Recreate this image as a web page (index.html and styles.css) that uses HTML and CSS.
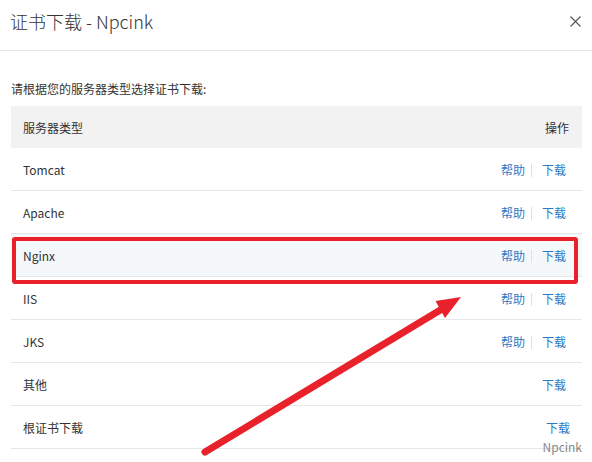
FILE: index.html
```html
<!DOCTYPE html>
<html lang="zh-CN">
<head>
<meta charset="utf-8">
<title>证书下载 - Npcink</title>
<link rel="stylesheet" href="styles.css">
</head>
<body>
<div class="dialog">
  <div class="dlg-head">
    <div class="dlg-title">证书下载 - Npcink</div>
    <svg class="dlg-close" width="11" height="11" viewBox="0 0 11 11"><path d="M0.5 0.5L10.5 10.5M10.5 0.5L0.5 10.5" stroke="#555" stroke-width="1.1" fill="none"/></svg>
  </div>
  <div class="dlg-body">
    <p class="hint">请根据您的服务器类型选择证书下载:</p>
    <table class="cert-table">
      <thead>
        <tr><th class="c-name">服务器类型</th><th class="c-op">操作</th></tr>
      </thead>
      <tbody>
        <tr><td class="c-name">Tomcat</td><td class="c-op"><a>帮助</a><span class="sep"></span><a>下载</a></td></tr>
        <tr><td class="c-name">Apache</td><td class="c-op"><a>帮助</a><span class="sep"></span><a>下载</a></td></tr>
        <tr class="hover"><td class="c-name">Nginx</td><td class="c-op"><a>帮助</a><span class="sep"></span><a>下载</a></td></tr>
        <tr><td class="c-name">IIS</td><td class="c-op"><a>帮助</a><span class="sep"></span><a>下载</a></td></tr>
        <tr><td class="c-name">JKS</td><td class="c-op"><a>帮助</a><span class="sep"></span><a>下载</a></td></tr>
        <tr><td class="c-name">其他</td><td class="c-op"><a>下载</a></td></tr>
        <tr><td class="c-name">根证书下载</td><td class="c-op c-op-root"><a>下载</a></td></tr>
      </tbody>
    </table>
  </div>
  <div class="mark-box"></div>
  <svg class="mark-arrow" width="592" height="462" viewBox="0 0 592 462">
    <line x1="205" y1="452" x2="442" y2="309" stroke="#e8212b" stroke-width="7" stroke-linecap="round"/>
    <polygon points="461,297 445,318 435.5,301" fill="#e8212b"/>
  </svg>
  <div class="watermark">Npcink</div>
</div>
</body>
</html>
```
FILE: styles.css
```css
html, body {
  margin: 0;
  padding: 0;
  background: #fff;
}
body {
  font-family: "Noto Sans CJK SC", "Noto Sans", sans-serif;
  color: #333;
}
.dialog {
  position: relative;
  width: 592px;
  height: 462px;
  overflow: hidden;
}
.dlg-head {
  height: 50px;
  border-bottom: 1px solid #e5e5e5;
  display: flex;
  justify-content: space-between;
  align-items: flex-start;
  padding: 0 11px 0 10px;
}
.dlg-title {
  font-size: 18px;
  line-height: 24px;
  padding-top: 9px;
  color: #333;
  font-weight: 300;
}
.dlg-close {
  margin-top: 16px;
}
.dlg-body {
  padding: 0 10px 0 11px;
}
.hint {
  margin: 28px 0 7px 0;
  font-size: 12px;
  line-height: 20px;
  color: #333;
}
.cert-table {
  width: 571px;
  border-collapse: collapse;
  font-size: 12px;
}
.cert-table th {
  background: #f2f2f2;
  height: 42px;
  padding: 0;
  font-weight: normal;
  color: #333;
}
.cert-table td {
  height: 42px;
  padding: 0;
  border-bottom: 1px solid #e6e6e6;
}
.cert-table tr.hover td {
  background: #f5f8fb;
}
.c-name {
  text-align: left;
  padding-left: 12px !important;
}
.c-op {
  text-align: right;
  padding-right: 16px !important;
  white-space: nowrap;
}
th.c-op {
  padding-right: 13px !important;
}
.c-op-root {
  padding-right: 12px !important;
}
.c-op a {
  color: #2b7bc4;
  text-decoration: none;
}
.sep {
  display: inline-block;
  width: 1px;
  height: 13px;
  background: #e0e0e0;
  vertical-align: -2px;
  margin: 0 10px 0 6px;
}
.mark-box {
  position: absolute;
  left: 12px;
  top: 237px;
  width: 566px;
  height: 47px;
  box-sizing: border-box;
  border: 4px solid #e8212b;
  border-radius: 3px;
}
.mark-arrow {
  position: absolute;
  left: 0;
  top: 0;
}
.watermark {
  position: absolute;
  right: 10px;
  top: 438px;
  font-size: 12px;
  line-height: 18px;
  color: #888;
}
```
